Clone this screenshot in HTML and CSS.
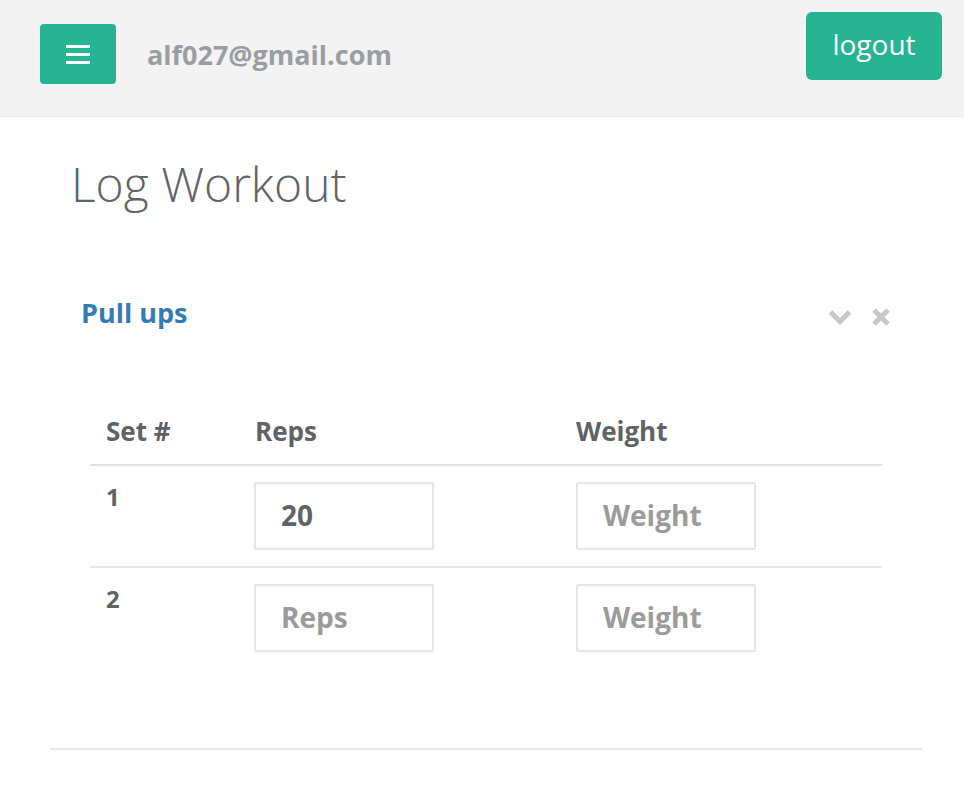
FILE: index.html
```html
<!DOCTYPE html>
<html>
<head>
<meta charset="utf-8">
<link rel="stylesheet" href="styles.css">
</head>
<body>
<header class="topbar">
  <button class="menu-btn" aria-label="menu">
    <span class="bar"></span><span class="bar"></span><span class="bar"></span>
  </button>
  <div class="email">alf027@gmail.com</div>
  <button class="logout-btn">logout</button>
</header>
<main class="main">
  <h1 class="page-title">Log Workout</h1>
  <section class="exercise">
    <div class="exercise-head">
      <div class="exercise-name">Pull ups</div>
      <div class="exercise-tools">
        <svg class="ico" width="24" height="16" viewBox="0 0 24 16"><path d="M2.5 3 L12 12.5 L21.5 3" fill="none" stroke="#c8c8c8" stroke-width="5"/></svg>
        <svg class="ico" width="18" height="18" viewBox="0 0 18 18"><path d="M2 2 L16 16 M16 2 L2 16" fill="none" stroke="#c8c8c8" stroke-width="5"/></svg>
      </div>
    </div>
    <table class="sets">
      <colgroup><col class="c1"><col class="c2"><col class="c3"></colgroup>
      <thead>
        <tr><th>Set #</th><th>Reps</th><th>Weight</th></tr>
      </thead>
      <tbody>
        <tr>
          <td class="num">1</td>
          <td><input class="field" type="text" value="20" placeholder="Reps"></td>
          <td><input class="field" type="text" placeholder="Weight"></td>
        </tr>
        <tr>
          <td class="num">2</td>
          <td><input class="field" type="text" placeholder="Reps"></td>
          <td><input class="field" type="text" placeholder="Weight"></td>
        </tr>
      </tbody>
    </table>
  </section>
</main>
</body>
</html>
```
FILE: styles.css
```css
* { box-sizing: border-box; }
body {
  margin: 0;
  font-family: "Open Sans", "Noto Sans", sans-serif;
  background: #fff;
  color: #5f6266;
}
.topbar {
  height: 117px;
  background: #f3f3f3;
  border-bottom: 1px solid #e4e6e8;
  display: flex;
  align-items: flex-start;
}
.menu-btn {
  margin: 24px 0 0 40px;
  width: 76px;
  height: 60px;
  background: #27b492;
  border: 0;
  border-radius: 4px;
  display: flex;
  flex-direction: column;
  align-items: center;
  justify-content: center;
  gap: 5px;
  padding: 0;
}
.menu-btn .bar {
  display: block;
  width: 24px;
  height: 3px;
  background: #fff;
}
.email {
  margin: 37px 0 0 31px;
  font-size: 27px;
  font-weight: 700;
  color: #9a9ea2;
  line-height: 36px;
}
.logout-btn {
  margin: 12px 22px 0 auto;
  width: 136px;
  height: 68px;
  background: #27b492;
  border: 0;
  border-radius: 6px;
  color: #fff;
  font-family: "Open Sans", sans-serif;
  font-size: 28px;
  padding: 0 0 4px;
}
.main {
  padding: 0 42px 0 50px;
}
.page-title {
  margin: 34px 0 0 21px;
  font-size: 48px;
  font-weight: 300;
  color: #606468;
  line-height: 65px;
}
.exercise {
  margin-top: 78px;
  border-bottom: 2px solid #e6e8ea;
  padding-bottom: 80px;
}
.exercise-head {
  display: flex;
  align-items: center;
  justify-content: space-between;
  padding: 0 32px 0 31px;
}
.exercise-name {
  font-size: 27px;
  font-weight: 700;
  color: #337ab7;
  line-height: 38px;
}
.exercise-tools {
  display: flex;
  align-items: center;
  gap: 20px;
  padding-top: 8px;
}
.ico { display: block; }
.sets {
  margin: 66px 40px 0;
  width: calc(100% - 80px);
  border-collapse: collapse;
  table-layout: fixed;
}
.c1 { width: 149px; }
.c2 { width: 321px; }
.c3 { width: 322px; }
.sets th {
  text-align: left;
  font-size: 26px;
  font-weight: 700;
  color: #5f6266;
  padding: 16px;
  line-height: 34px;
  border-bottom: 2px solid #e0e2e4;
}
.sets td {
  padding: 16px 0 16px 16px;
  vertical-align: top;
  border-bottom: 2px solid #e6e8ea;
}
.sets tbody tr:last-child td { border-bottom: 0; }
.sets td:nth-child(2) { padding-left: 15px; }
.sets td.num {
  font-size: 24px;
  font-weight: 700;
  color: #5f6266;
  line-height: 34px;
  padding-top: 14px;
}
.field {
  display: block;
  width: 180px;
  height: 68px;
  border: 2px solid #e6e6e6;
  border-radius: 2px;
  padding: 0 0 2px 25px;
  font-family: "Open Sans", sans-serif;
  font-size: 28px;
  font-weight: 700;
  color: #5f6266;
  background: #fff;
  outline: none;
}
.field::placeholder {
  color: #9b9b9b;
  opacity: 1;
}
```
